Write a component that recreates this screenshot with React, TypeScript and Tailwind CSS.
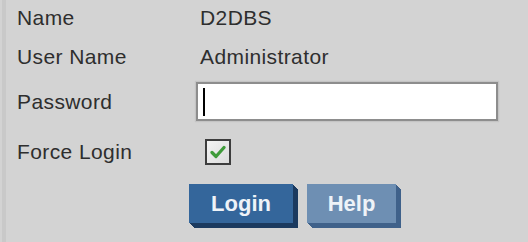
import React from "react";

export default function App() {
  const font = { fontFamily: '"Liberation Sans", Arial, sans-serif' };
  return (
    <div
      className="w-[528px] h-[242px] bg-[#d3d3d3] relative overflow-hidden text-[#2e2e2e]"
      style={font}
    >
      <div className="absolute left-[2px] top-0 bottom-0 w-[4px] bg-[#c9c9c9]" />
      <div className="flex flex-col pl-[17px] tracking-[0.4px]">
        <div className="flex items-center h-[36px] text-[21px]">
          <span className="w-[180px]">Name</span>
          <span className="pl-[3px]">D2DBS</span>
        </div>
        <div className="flex items-center h-[42px] text-[21px]">
          <span className="w-[180px]">User Name</span>
          <span className="pl-[3px]">Administrator</span>
        </div>
        <div className="flex items-center h-[43px] mt-[2px] text-[21px]">
          <span className="w-[179px]">Password</span>
          <div className="w-[302px] h-[39px] border-2 border-[#8d8d8d] bg-white shadow-[0_0_1px_1px_#c4c4c4] flex items-center pl-[5px]">
            <div className="w-[2px] h-[28px] bg-black" />
          </div>
        </div>
        <div className="flex items-center h-[42px] mt-[8px] text-[21px]">
          <span className="w-[188px]">Force Login</span>
          <div className="w-[26px] h-[26px] border-2 border-[#3d3d3d] bg-gradient-to-br from-[#f4f4f4] to-[#dcdcdc] flex items-center justify-center">
            <svg width="16" height="14" viewBox="0 0 16 14">
              <path d="M2 7.5 L6 11.5 L14 2.5" fill="none" stroke="#3f9b3a" strokeWidth="3.2" strokeLinecap="round" strokeLinejoin="round" />
            </svg>
          </div>
        </div>
        <div className="flex mt-[11px] pl-[172px] gap-[14px] tracking-normal">
          <button
            className="w-[104px] h-[39px] bg-[#34669b] text-[#eef3f8] font-bold text-[22px] shadow-[1px_1px_0_#1b3a5f,2px_2px_0_#1b3a5f,3px_3px_0_#1b3a5f,4px_4px_0_#1b3a5f,5px_5px_0_#1b3a5f] flex items-center justify-center"
            style={font}
          >
            Login
          </button>
          <button
            className="w-[89px] h-[39px] bg-[#6e8fb3] text-[#eef3f8] font-bold text-[22px] shadow-[1px_1px_0_#3f618a,2px_2px_0_#3f618a,3px_3px_0_#3f618a,4px_4px_0_#3f618a,5px_5px_0_#3f618a] flex items-center justify-center"
            style={font}
          >
            Help
          </button>
        </div>
      </div>
    </div>
  );
}
